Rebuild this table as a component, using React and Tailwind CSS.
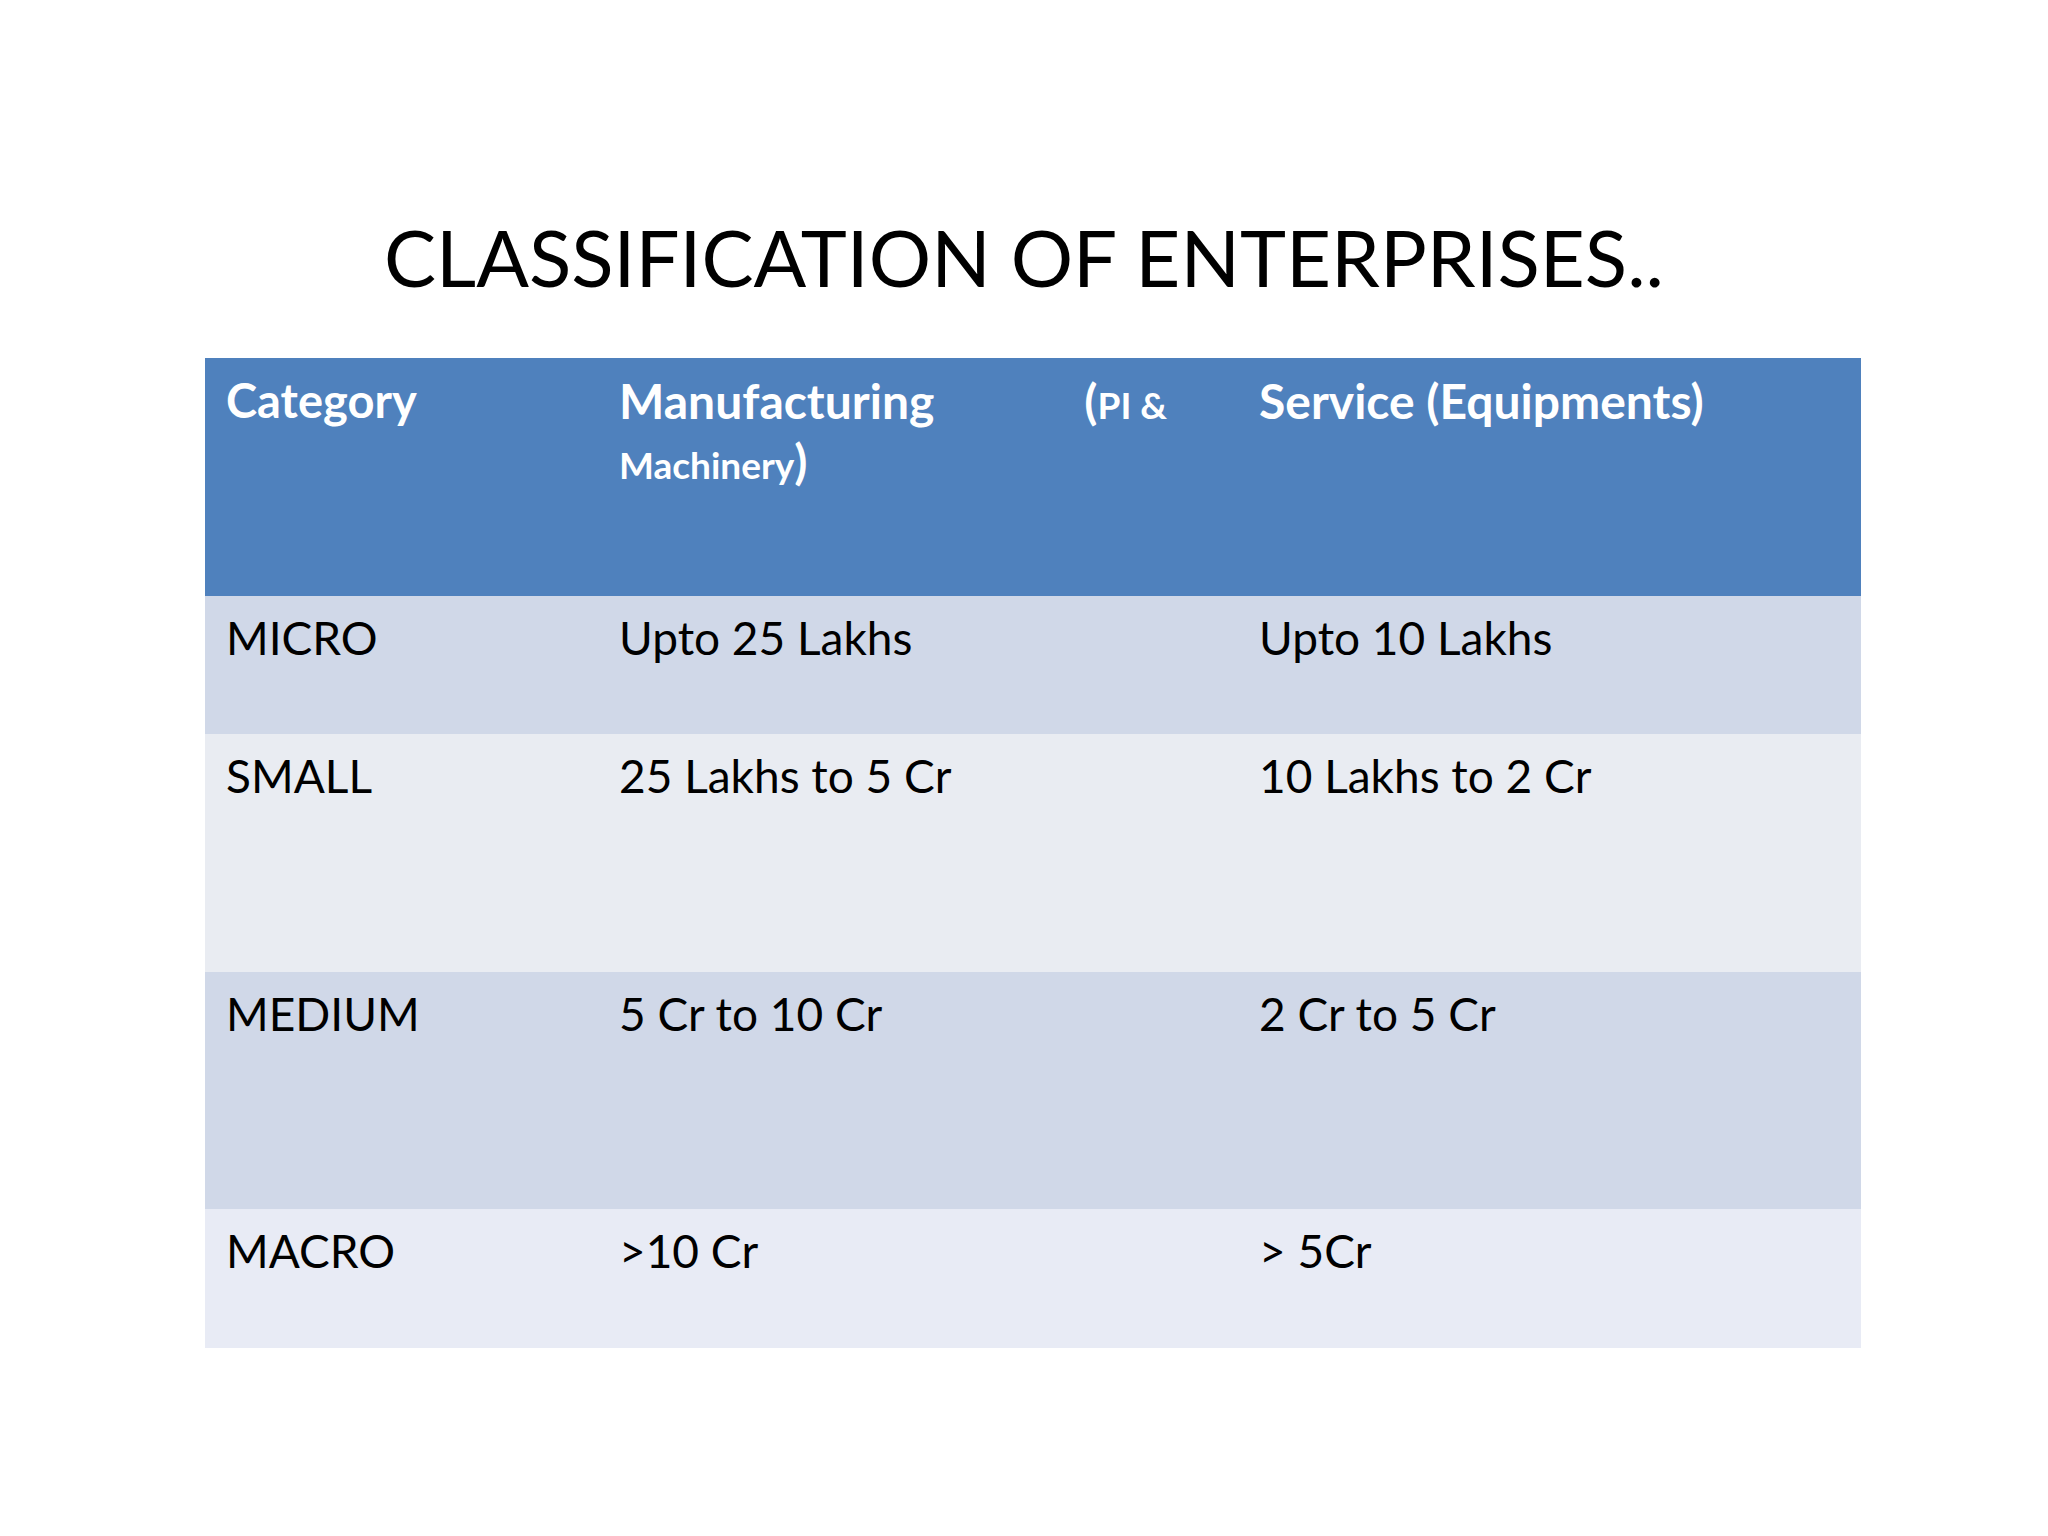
const rows = [
  { name: "MICRO", mfg: "Upto 25 Lakhs", svc: "Upto 10 Lakhs", h: "h-[138px]", bg: "bg-[#d0d8e8]" },
  { name: "SMALL", mfg: "25 Lakhs to 5 Cr", svc: "10 Lakhs to 2 Cr", h: "h-[238px]", bg: "bg-[#e9ecf2]" },
  { name: "MEDIUM", mfg: "5 Cr to 10 Cr", svc: "2 Cr to 5 Cr", h: "h-[237px]", bg: "bg-[#d0d8e8]" },
  { name: "MACRO", mfg: ">10 Cr", svc: "> 5Cr", h: "h-[139px]", bg: "bg-[#e8ebf5]" },
];

const App = () => {
  return (
    <div className="w-[2048px] h-[1536px] bg-white font-['Lato',sans-serif] text-black">
      <h1 className="pt-[218px] text-center text-[78px] leading-none font-normal">
        CLASSIFICATION OF ENTERPRISES..
      </h1>

      <div className="mt-[62px] ml-[205px] w-[1656px]">
        {/* header */}
        <div className="grid grid-cols-[393px_640px_623px] h-[238px] bg-[#4f81bd] text-white font-bold">
          <div className="pl-[21px] pt-[14px] text-[47px] leading-[1.2]">Category</div>
          <div className="pl-[21px] pt-[14px]">
            <div className="text-[48px] leading-[1.2] whitespace-nowrap">
              Manufacturing
              <span className="ml-[150px]">(</span>
              <span className="text-[37px]">PI &amp;</span>
            </div>
            <div className="mt-[2px] text-[48px] leading-[1.2]">
              <span className="text-[37px]">Machinery</span>)
            </div>
          </div>
          <div className="pl-[21px] pt-[14px] text-[48px] leading-[1.2]">Service (Equipments)</div>
        </div>

        {rows.map((r) => (
          <div
            key={r.name}
            className={`grid grid-cols-[393px_640px_623px] ${r.h} ${r.bg} text-[46px] leading-[1.2]`}
          >
            <div className="pl-[21px] pt-[14px]">{r.name}</div>
            <div className="pl-[21px] pt-[14px]">{r.mfg}</div>
            <div className="pl-[21px] pt-[14px]">{r.svc}</div>
          </div>
        ))}
      </div>
    </div>
  );
};

export default App;
